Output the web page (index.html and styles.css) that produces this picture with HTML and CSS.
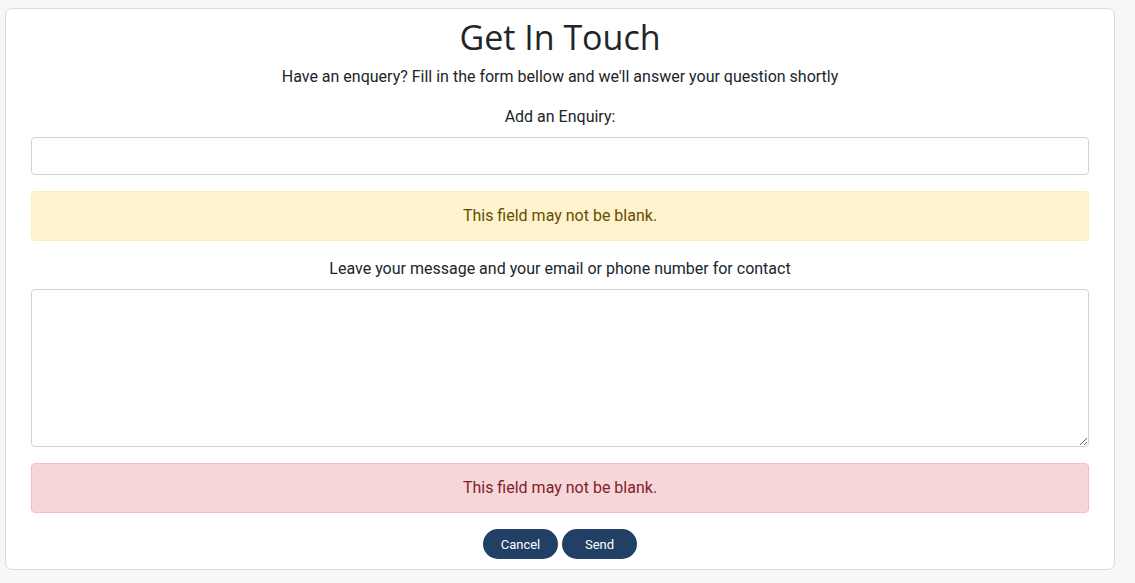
FILE: index.html
```html
<!DOCTYPE html>
<html lang="en">
<head>
<meta charset="utf-8">
<title>Get In Touch</title>
<link rel="stylesheet" href="styles.css">
</head>
<body>
<div class="page">
  <form class="card">
    <h1 class="title">Get In Touch</h1>
    <p class="lead">Have an enquery? Fill in the form bellow and we'll answer your question shortly</p>
    <label class="label" for="enquiry">Add an Enquiry:</label>
    <input class="field" id="enquiry" type="text">
    <div class="alert alert-warning">This field may not be blank.</div>
    <label class="label" for="message">Leave your message and your email or phone number for contact</label>
    <textarea class="field area" id="message"></textarea>
    <div class="alert alert-danger">This field may not be blank.</div>
    <div class="actions">
      <button type="button" class="btn">Cancel</button>
      <button type="button" class="btn">Send</button>
    </div>
  </form>
</div>
</body>
</html>
```
FILE: styles.css
```css
* { box-sizing: border-box; }
html, body { margin: 0; padding: 0; }
body {
  background: #f7f7f7;
  font-family: Roboto, "Liberation Sans", sans-serif;
  font-size: 16px;
  line-height: 24px;
  color: #212529;
}
.page {
  padding: 8px 20px 0 5px;
}
.card {
  display: flex;
  flex-direction: column;
  align-items: stretch;
  background: #fff;
  border: 1px solid #dcdcdc;
  border-radius: 7px;
  padding: 8px 25px 9px;
  height: 562px;
}
.title {
  margin: 0 0 8px;
  text-align: center;
  font-family: "Open Sans", Lato, sans-serif;
  font-weight: 400;
  font-size: 34px;
  line-height: 40px;
  color: #212529;
}
.lead {
  margin: 0 0 16px;
  text-align: center;
}
.label {
  display: block;
  text-align: center;
  margin-bottom: 8px;
}
.field {
  display: block;
  width: 100%;
  height: 38px;
  border: 1px solid #ced0da;
  border-radius: 4px;
  background: #fff;
  font: inherit;
  padding: 6px 12px;
  margin: 0 0 16px;
}
.area {
  height: 158px;
  resize: vertical;
}
.alert {
  height: 50px;
  padding: 12px 16px;
  border: 1px solid transparent;
  border-radius: 4px;
  text-align: center;
  margin-bottom: 16px;
}
.alert-warning {
  background: #fff3cd;
  border-color: #ffecb5;
  color: #664d03;
}
.alert-danger {
  background: #f5d6d9;
  border-color: #f1c0c5;
  color: #842029;
}
.actions {
  display: flex;
  justify-content: center;
  gap: 4px;
}
.btn {
  width: 75px;
  height: 30px;
  border: 0;
  border-radius: 15px;
  background: #223f66;
  color: #fff;
  font-family: Roboto, "Liberation Sans", sans-serif;
  font-size: 13px;
  font-weight: 400;
  padding: 0;
}
```
